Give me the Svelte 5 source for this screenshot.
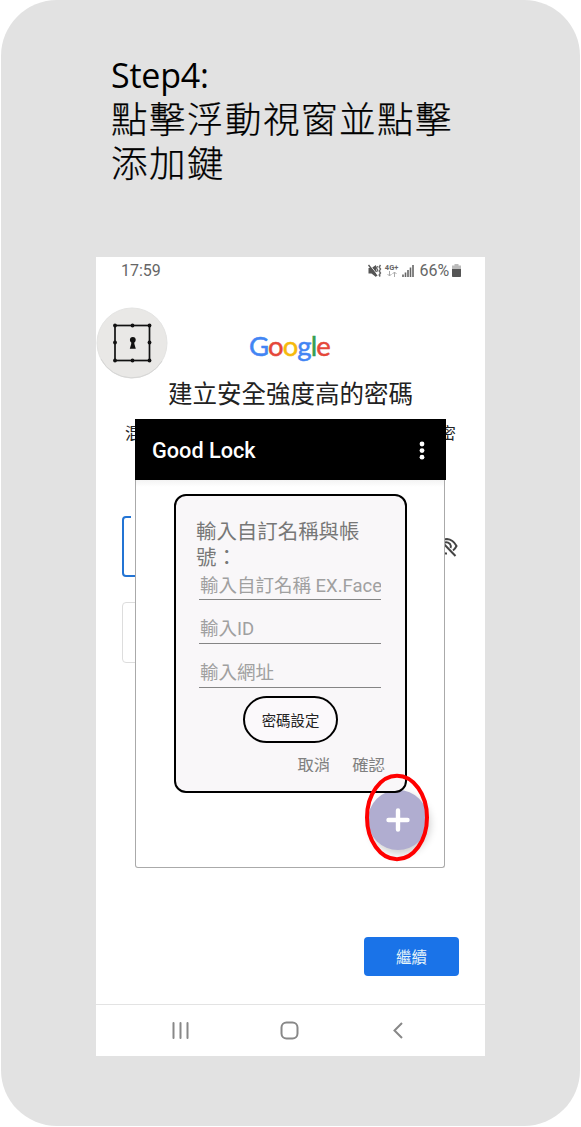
<script>
  const brand = [
    ['G', '#4285f4'],
    ['o', '#e5473a'],
    ['o', '#f6b90c'],
    ['g', '#4285f4'],
    ['l', '#34a04f'],
    ['e', '#e5473a'],
  ];
  const fields = ['輸入自訂名稱 EX.Face', '輸入ID', '輸入網址'];
</script>

<main class="card">
  <h1><b>Step4:</b><span>點擊浮動視窗並點擊</span><span>添加鍵</span></h1>

  <section class="phone">
    <header class="status">
      <span class="time">17:59</span>
      <svg class="mute" width="14" height="14" viewBox="0 0 14 14">
        <path d="M0.500 4h3L8 1v12L3.500 9.500H.5z" fill="#555" />
        <path d="M1.500 0.500l8.500 11" stroke="#fff" stroke-width="1" />
        <path d="M0.500 1l8.500 11" stroke="#555" stroke-width="1.400" />
        <path d="M9.500 2l-1 2 1 2-1 2M12.500 1l-1.300 2 1.300 2-1.300 2 1.300 2-1.300 2 1 1.500" fill="none" stroke="#666" stroke-width="1.400" />
      </svg>
      <span class="net"><b>4G+</b>
        <svg width="10" height="6" viewBox="0 0 10 6"><path d="M2.5 0v5M.5 3l2 2 2-2M7.5 6V1M5.5 3l2-2 2 2" fill="none" stroke="#aaa" /></svg>
      </span>
      <svg class="signal" width="12" height="12" viewBox="0 0 12 12">
        <path d="M1 12V9.5M3.5 12V7.5M6 12V5M8.5 12V2.5M11 12V0" stroke="#666" stroke-width="1.6" />
      </svg>
      <span class="percent">66%</span>
      <svg class="battery" width="9" height="13" viewBox="0 0 9 13">
        <path d="M2.5 0h4v1.5H9V5H0V1.5h2.5z" fill="#bbb" />
        <path d="M0 5h9v7.2q0 .8-.8.8H.8Q0 13 0 12.200z" fill="#555" />
      </svg>
    </header>

    <div class="brand">{#each brand as [letter, color]}<span style:color>{letter}</span>{/each}</div>
    <h2>建立安全強度高的密碼</h2>
    <p class="hint"><span>混</span><span>密</span></p>

    <div class="entry active">
      <div class="box"><i></i></div>
      <svg width="22" height="22" viewBox="0 0 22 22" fill="none" stroke="#444" stroke-width="2">
        <path d="M1 11Q4 3 11 3Q17 3.500 20.500 10Q19 13 17 14.500M7.500 7Q11 5 14 8Q15.500 10 14.500 12M5 5l14.500 15M2 12Q5 18 11 17.500" />
      </svg>
    </div>
    <div class="entry"><div class="box"></div></div>

    <button class="continue">繼續</button>

    <nav>
      <svg width="17" height="17" viewBox="0 0 17 17"><path d="M1.500 1v15M8.500 1v15M15.500 1v15" stroke="#888" stroke-width="2" stroke-linecap="round" /></svg>
      <svg class="home" width="19" height="19" viewBox="0 0 19 19"><rect x="1.500" y="1.500" width="16" height="16" rx="5" fill="none" stroke="#888" stroke-width="2" /></svg>
      <svg width="10" height="17" viewBox="0 0 10 17"><path d="M9 1L1.500 8.500 9 16" fill="none" stroke="#888" stroke-width="2" /></svg>
    </nav>

    <svg class="bubble" width="72" height="72" viewBox="0 0 72 72">
      <circle cx="36" cy="36" r="35" fill="#e9e8e6" stroke="#e4e4e3" />
      <path d="M5 52A35 35 0 0 0 66 54" fill="none" stroke="#d6d6d5" />
      <rect x="19" y="18.500" width="34.500" height="35" fill="none" stroke="#111" stroke-width="1.700" />
      <g fill="#111">
        <circle cx="19" cy="18.500" r="1.900" /><circle cx="36.500" cy="18.500" r="1.900" /><circle cx="53.500" cy="18.500" r="1.900" />
        <circle cx="19" cy="35.500" r="1.900" /><circle cx="53.500" cy="35.500" r="1.900" />
        <circle cx="19" cy="53.500" r="1.900" /><circle cx="36.500" cy="53.500" r="1.900" /><circle cx="53.500" cy="53.500" r="1.900" />
        <circle cx="36.800" cy="32.800" r="2.900" />
        <path d="M35.500 33h2.600l.3 4 1.400 4.700h-6l1.400-4.700z" />
      </g>
    </svg>

    <section class="window">
      <header class="bar">
        <strong>Good Lock</strong>
        <svg width="6" height="20" viewBox="0 0 6 20" fill="#fff"><circle cx="3" cy="3" r="2.400" /><circle cx="3" cy="9.600" r="2.400" /><circle cx="3" cy="16.200" r="2.400" /></svg>
      </header>
      <div class="content">
        <button class="fab" aria-label="添加">
          <svg width="24" height="24" viewBox="0 0 24 24"><path d="M12 2.500v19M2.500 12h19" stroke="#fff" stroke-width="4.400" stroke-linecap="round" /></svg>
        </button>
        <form class="dialog">
          <h3>輸入自訂名稱與帳號：</h3>
          {#each fields as field}
            <div class="field">{field}</div>
          {/each}
          <button type="button" class="set">密碼設定</button>
          <footer><span>取消</span><span>確認</span></footer>
        </form>
      </div>
    </section>

    <svg class="ring" width="66" height="90" viewBox="0 0 66 90"><ellipse cx="33" cy="45.500" rx="30" ry="41.700" fill="none" stroke="#f00" stroke-width="4" /></svg>
  </section>
</main>

<style>
  :global(body) { margin: 0; background: #fff; }
  * { box-sizing: border-box; }
  .card {
    width: 579px; height: 1126px; margin-left: 1px; padding: 54px 95px 0;
    border-radius: 56px; background: #e2e2e2;
    font-family: Roboto, "Noto Sans CJK TC", sans-serif;
  }
  h1 {
    margin: 0 0 0 15px; height: 203px; font: 400 36.500px/43.500px "Noto Sans CJK TC", sans-serif;
    color: #000; white-space: nowrap;
  }
  h1 b { display: block; height: 42px; font: 400 34px/43px "Open Sans", sans-serif; letter-spacing: -.2px; }
  h1 span { display: block; font-weight: 300; letter-spacing: 1.500px; -webkit-text-stroke: .25px #000; }
  .phone {
    position: relative; width: 389px; height: 799px; background: #fff; overflow: hidden;
    display: flex; flex-direction: column;
  }
  .status { height: 27px; padding: 0 24px 0 25px; display: flex; align-items: center; color: #666; font-size: 16px; flex: none; }
  .time { margin-right: auto; }
  .mute { margin-right: 3px; }
  .net { width: 14px; margin-right: 3px; font-size: 7.500px; line-height: 7px; display: flex; flex-direction: column; align-items: center; }
  .signal { margin-right: 6px; }
  .percent { margin-right: 3px; letter-spacing: -.1px; }
  .brand { margin: 44px 0 0 153px; height: 38px; flex: none; font: 400 27.500px/35px Lato, sans-serif; letter-spacing: -.9px; -webkit-text-stroke: .5px; white-space: nowrap; }
  h2 { margin: 11px 0 0; height: 36px; line-height: 36px; font-size: 24.500px; font-weight: 400; text-align: center; color: #222; }
  .hint { margin: 10px 29px 0; height: 22px; line-height: 22px; font-size: 16.400px; display: flex; justify-content: space-between; color: #222; }
  .entry { height: 61px; margin: 25px 27px 0 26px; display: flex; align-items: center; justify-content: space-between; flex: none; }
  .entry.active { margin-top: 71px; }
  .box { width: 300px; height: 100%; border: 1px solid #ddd; border-radius: 4px; }
  .active .box { border: 2px solid #2374d4; }
  .box i { display: block; width: 70px; height: 4px; margin: -3px 0 0 7px; background: #fff; }
  .entry:not(.active) .box i { display: none; }
  .continue {
    margin: 274px 26px 0 auto; width: 95px; height: 39px; flex: none; border: 0; border-radius: 4px;
    background: #1a73e8; color: #e8f6fa; font: 400 15.500px "Noto Sans CJK TC", sans-serif; padding: 0 0 2px;
  }
  nav { margin-top: 28px; height: 52px; flex: none; border-top: 1px solid #e3e3e3; padding: 0 82px 0 76px; display: flex; align-items: center; justify-content: space-between; }
  .home { margin-right: 4px; }
  .bubble { position: absolute; left: 0; top: 50px; }
  .window { position: absolute; left: 39px; top: 162px; width: 311px; height: 449px; }
  .bar { height: 61px; padding: 2px 21px 0 17px; background: #000; color: #fff; display: flex; align-items: center; justify-content: space-between; font-size: 21.700px; }
  .bar strong { font-weight: 500; }
  .content { position: relative; width: 310px; height: 388px; padding: 14px 0 0 38px; border: 1px solid #aaa; border-top: 0; border-radius: 0 0 3px 3px; background: linear-gradient(#f3f3f3, #fff 7px); }
  .fab {
    position: absolute; left: 232px; top: 310px; width: 60px; height: 60px; padding: 0; border: 0; border-radius: 50%;
    background: #b0add0; box-shadow: 2px 4px 8px #0003; display: grid; place-items: center;
  }
  .dialog { position: relative; width: 233px; height: 299px; border: 2px solid #000; border-radius: 12px; background: #f9f7f9; padding: 23px 24px 0 20px; }
  h3 { margin: 0; font-size: 20.450px; line-height: 26px; font-weight: 400; color: #777; width: 165px; height: 52px; }
  .field {
    margin-left: 3px; width: 182px; height: 44px; padding: 15px 0 0 1px; border-bottom: 1px solid #858585;
    font-size: 18.500px; line-height: 28px; color: #a0a0a0; white-space: nowrap; overflow: hidden;
  }
  .field:first-of-type { height: 29px; padding-top: 0; line-height: 30px; }
  .set {
    display: block; margin: 8px 0 0 47px; width: 95px; height: 47px; padding: 0; border: 2px solid #000; border-radius: 24px;
    background: #fbf9fb; color: #222; font: 400 14.400px "Noto Sans CJK TC", sans-serif;
  }
  footer { margin: 9px -4px 0 0; height: 20px; overflow: hidden; display: flex; justify-content: flex-end; gap: 22px; font-size: 16.400px; line-height: 27px; color: #808080; }
  .ring { position: absolute; left: 268px; top: 515px; }
</style>
